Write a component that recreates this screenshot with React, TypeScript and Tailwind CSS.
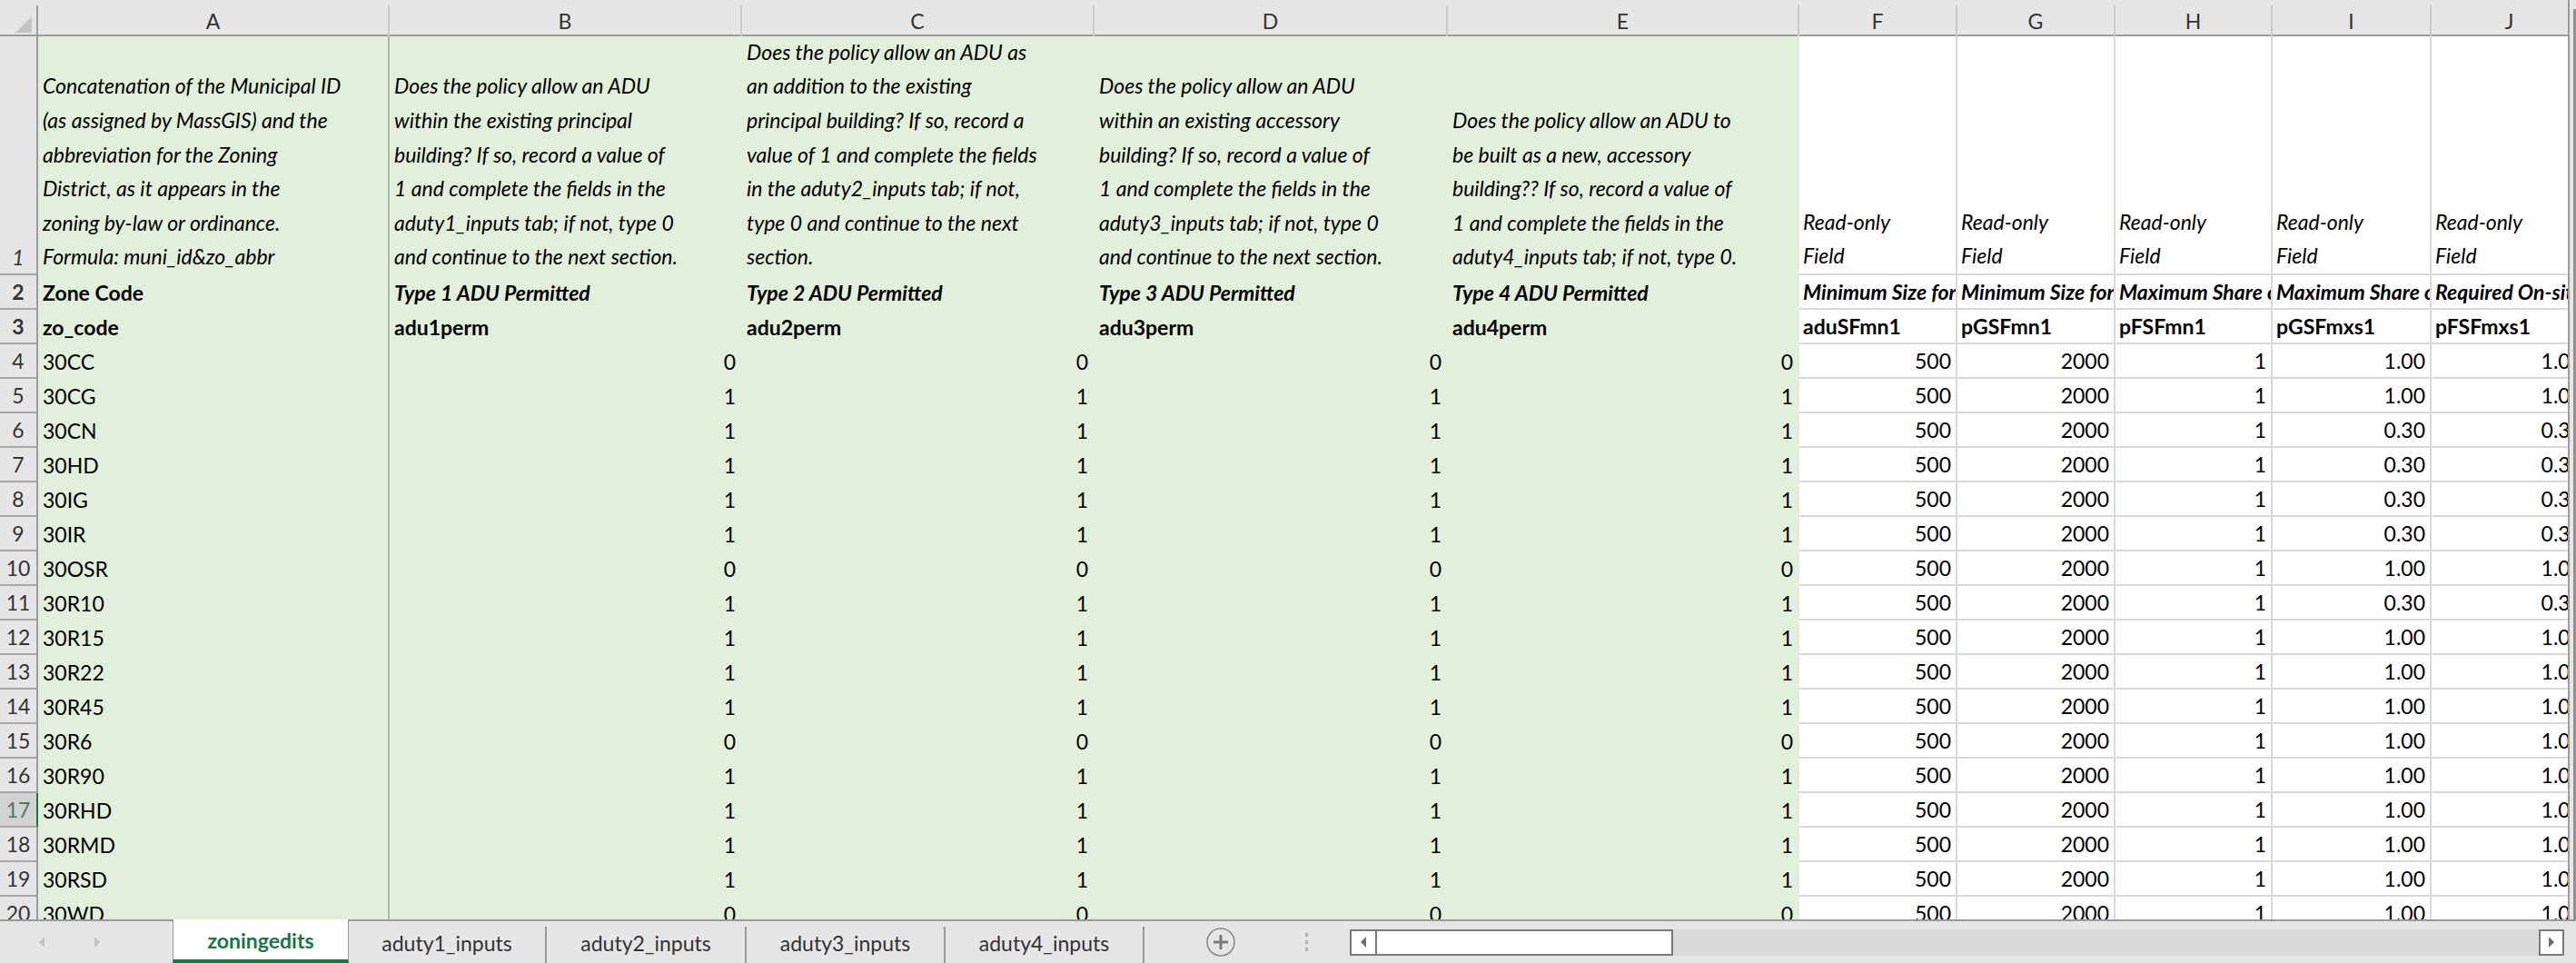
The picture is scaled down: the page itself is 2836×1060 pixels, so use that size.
import React from 'react';

const COLS = 'grid grid-cols-[42px_387px_388px_388px_389px_387px_174px_174px_173px_175px_173px]';
const FONT = "font-['Lato','Liberation_Sans',sans-serif]";

const letters = ['A', 'B', 'C', 'D', 'E', 'F', 'G', 'H', 'I', 'J'];

const notes: string[][] = [
  [
    'Concatenation of the Municipal ID',
    '(as assigned by MassGIS) and the',
    'abbreviation for the Zoning',
    'District, as it appears in the',
    'zoning by-law or ordinance.',
    'Formula: muni_id&zo_abbr',
  ],
  [
    'Does the policy allow an ADU',
    'within the existing principal',
    'building? If so, record a value of',
    '1 and complete the fields in the',
    'aduty1_inputs tab; if not, type 0',
    'and continue to the next section.',
  ],
  [
    'Does the policy allow an ADU as',
    'an addition to the existing',
    'principal building? If so, record a',
    'value of 1 and complete the fields',
    'in the aduty2_inputs tab; if not,',
    'type 0 and continue to the next',
    'section.',
  ],
  [
    'Does the policy allow an ADU',
    'within an existing accessory',
    'building? If so, record a value of',
    '1 and complete the fields in the',
    'aduty3_inputs tab; if not, type 0',
    'and continue to the next section.',
  ],
  [
    'Does the policy allow an ADU to',
    'be built as a new, accessory',
    'building?? If so, record a value of',
    '1 and complete the fields in the',
    'aduty4_inputs tab; if not, type 0.',
  ],
];

const labels = [
  'Zone Code',
  'Type 1 ADU Permitted',
  'Type 2 ADU Permitted',
  'Type 3 ADU Permitted',
  'Type 4 ADU Permitted',
  'Minimum Size for ADU',
  'Minimum Size for Principal',
  'Maximum Share of Floor Area',
  'Maximum Share of Gross Floor Area',
  'Required On-site Parking',
];

const fields = ['zo_code', 'adu1perm', 'adu2perm', 'adu3perm', 'adu4perm', 'aduSFmn1', 'pGSFmn1', 'pFSFmn1', 'pGSFmxs1', 'pFSFmxs1'];

// row number, zone, permitted flag (B-E), share (I, J)
const data: [number, string, number, string][] = [
  [4, '30CC', 0, '1.00'],
  [5, '30CG', 1, '1.00'],
  [6, '30CN', 1, '0.30'],
  [7, '30HD', 1, '0.30'],
  [8, '30IG', 1, '0.30'],
  [9, '30IR', 1, '0.30'],
  [10, '30OSR', 0, '1.00'],
  [11, '30R10', 1, '0.30'],
  [12, '30R15', 1, '1.00'],
  [13, '30R22', 1, '1.00'],
  [14, '30R45', 1, '1.00'],
  [15, '30R6', 0, '1.00'],
  [16, '30R90', 1, '1.00'],
  [17, '30RHD', 1, '1.00'],
  [18, '30RMD', 1, '1.00'],
  [19, '30RSD', 1, '1.00'],
  [20, '30WD', 0, '1.00'],
];

function RowHead({ n, tall, active }: { n: number; tall?: boolean; active?: boolean }) {
  return (
    <div
      className={`flex justify-center border-b-2 border-r-2 border-b-[#a6a6a6] text-[23px] leading-[36px] ${
        tall ? 'items-end' : 'items-center'
      } ${active ? 'bg-[#d2d2d2] text-[#4d7a62] border-r-[#217346]' : 'bg-[#e6e6e6] text-[#333] border-r-[#9b9b9b]'}`}
    >
      {n}
    </div>
  );
}

function Green({ children, right, first, className = '' }: { children?: React.ReactNode; right?: boolean; first?: boolean; className?: string }) {
  return (
    <div
      className={`bg-[#e2efda] flex items-center overflow-hidden whitespace-nowrap ${right ? 'justify-end pr-[7px]' : 'pl-[5px]'} ${
        first ? 'border-r-2 border-[#b3b3b3]' : ''
      } ${className}`}
    >
      {children}
    </div>
  );
}

function White({ children, right, className = '' }: { children?: React.ReactNode; right?: boolean; className?: string }) {
  return (
    <div
      className={`bg-white border-r-2 border-b-2 border-[#d9d9d9] flex items-center overflow-hidden whitespace-nowrap ${
        right ? 'justify-end pr-[5px]' : 'pl-[4px]'
      } ${className}`}
    >
      {children}
    </div>
  );
}

function Tri({ dir, className = '' }: { dir: 'l' | 'r'; className?: string }) {
  return (
    <svg width="8" height="12" viewBox="0 0 8 12" className={className}>
      {dir === 'l' ? <path d="M7 0 L1 6 L7 12 Z" fill="currentColor" /> : <path d="M1 0 L7 6 L1 12 Z" fill="currentColor" />}
    </svg>
  );
}

export default function App() {
  return (
    <div className={`w-[2836px] h-[1060px] overflow-hidden flex flex-col bg-[#e6e6e6] text-black ${FONT}`}>
      <div className="flex h-[1012px]">
        {/* Sheet */}
        <div className="w-[2827px] overflow-hidden flex flex-col">
          {/* Column headers */}
          <div className={`${COLS} h-[40px] shrink-0 bg-[#e6e6e6] border-b-2 border-[#9b9b9b] pt-[6px]`}>
            <div className="border-r-2 border-[#9b9b9b] flex items-end justify-end pr-[5px] pb-[5px]">
              <svg width="18" height="18" viewBox="0 0 18 18">
                <path d="M18 0 L18 18 L0 18 Z" fill="#c4c4c4" />
              </svg>
            </div>
            {letters.map((l) => (
              <div key={l} className="border-r-2 border-[#cacaca] flex items-center justify-center text-[23px] text-[#333]">
                {l}
              </div>
            ))}
          </div>

          {/* Row 1: instructions */}
          <div className={`${COLS} h-[263px] shrink-0 text-[23px] italic leading-[37.6px]`}>
            <RowHead n={1} tall />
            {notes.map((lines, i) => (
              <Green key={i} first={i === 0} className="!items-end pb-[1px]">
                <div>
                  {lines.map((t, j) => (
                    <div key={j}>{t}</div>
                  ))}
                </div>
              </Green>
            ))}
            {[0, 1, 2, 3, 4].map((i) => (
              <White key={i} className="!items-end">
                <div>
                  <div>Read-only</div>
                  <div>Field</div>
                </div>
              </White>
            ))}
          </div>

          {/* Row 2: labels */}
          <div className={`${COLS} h-[38px] shrink-0 text-[23px] font-bold leading-[36px]`}>
            <RowHead n={2} />
            {labels.map((t, i) =>
              i < 5 ? (
                <Green key={i} first={i === 0} className={i > 0 ? 'italic' : ''}>
                  {t}
                </Green>
              ) : (
                <White key={i} className="italic">
                  {t}
                </White>
              )
            )}
          </div>

          {/* Row 3: field names */}
          <div className={`${COLS} h-[38px] shrink-0 text-[23px] font-bold leading-[36px]`}>
            <RowHead n={3} />
            {fields.map((t, i) =>
              i < 5 ? (
                <Green key={i} first={i === 0}>
                  {t}
                </Green>
              ) : (
                <White key={i}>{t}</White>
              )
            )}
          </div>

          {/* Data rows */}
          {data.map(([n, zone, flag, share]) => (
            <div key={n} className={`${COLS} h-[38px] shrink-0 text-[23px] leading-[36px]`}>
              <RowHead n={n} active={n === 17} />
              <Green first>{zone}</Green>
              <Green right>{flag}</Green>
              <Green right>{flag}</Green>
              <Green right>{flag}</Green>
              <Green right>{flag}</Green>
              <White right>500</White>
              <White right>2000</White>
              <White right>1</White>
              <White right>{share}</White>
              <White right>{share}</White>
            </div>
          ))}
        </div>

        {/* Vertical scrollbar edge */}
        <div className="flex-1 flex border-l-2 border-[#9b9b9b] bg-[#e6e6e6]">
          <div className="flex-1" />
          <div className="w-[3px] mt-[10px] bg-[#8f8f8f]" />
        </div>
      </div>

      {/* Sheet tabs bar */}
      <div className="h-[48px] flex text-[23px]">
        <div className="w-[190px] border-t-2 border-[#9b9b9b] flex items-center gap-[53px] pl-[42px] text-[#c2c2c2]">
          <Tri dir="l" />
          <Tri dir="r" />
        </div>
        <div className="w-[194px] bg-white border-l border-r border-[#9b9b9b] border-b-[4px] border-b-[#217346] flex items-center justify-center font-bold text-[#217346] pt-[2px]">
          zoningedits
        </div>
        {['aduty1_inputs', 'aduty2_inputs', 'aduty3_inputs', 'aduty4_inputs'].map((t, i) => (
          <div key={t} className={`${i === 0 ? 'w-[218px]' : i === 1 ? 'w-[220px]' : 'w-[219px]'} border-t-2 border-[#9b9b9b]`}>
            <div className="mt-[6px] h-[40px] border-r-2 border-[#9a9a9a] flex items-center justify-center text-[#333] pb-[4px]">
              {t}
            </div>
          </div>
        ))}
        <div className="flex-1 border-t-2 border-[#9b9b9b] flex items-center">
          <div className="w-[226px] flex items-center">
            <div className="ml-[67px]">
              <svg width="34" height="34" viewBox="0 0 34 34">
                <circle cx="17" cy="17" r="15" fill="none" stroke="#8a8a8a" strokeWidth="1.6" />
                <path d="M17 9 V25 M9 17 H25" stroke="#7a7a7a" strokeWidth="3" />
              </svg>
            </div>
            <div className="ml-[76px] flex flex-col gap-[4px]">
              <div className="w-[3px] h-[4px] bg-[#b0b0b0]" />
              <div className="w-[3px] h-[4px] bg-[#b0b0b0]" />
              <div className="w-[3px] h-[4px] bg-[#b0b0b0]" />
            </div>
          </div>
          {/* Horizontal scrollbar */}
          <div className="w-[1337px] h-[29px] flex">
            <div className="w-[30px] bg-white border-2 border-[#7a7a7a] flex items-center justify-center text-[#6e6e6e]">
              <Tri dir="l" />
            </div>
            <div className="w-[326px] bg-white border-2 border-l-0 border-[#7a7a7a]" />
            <div className="flex-1 bg-[#dadada]" />
            <div className="w-[28px] bg-white border-2 border-[#7a7a7a] flex items-center justify-center text-[#6e6e6e]">
              <Tri dir="r" />
            </div>
          </div>
        </div>
      </div>
    </div>
  );
}
